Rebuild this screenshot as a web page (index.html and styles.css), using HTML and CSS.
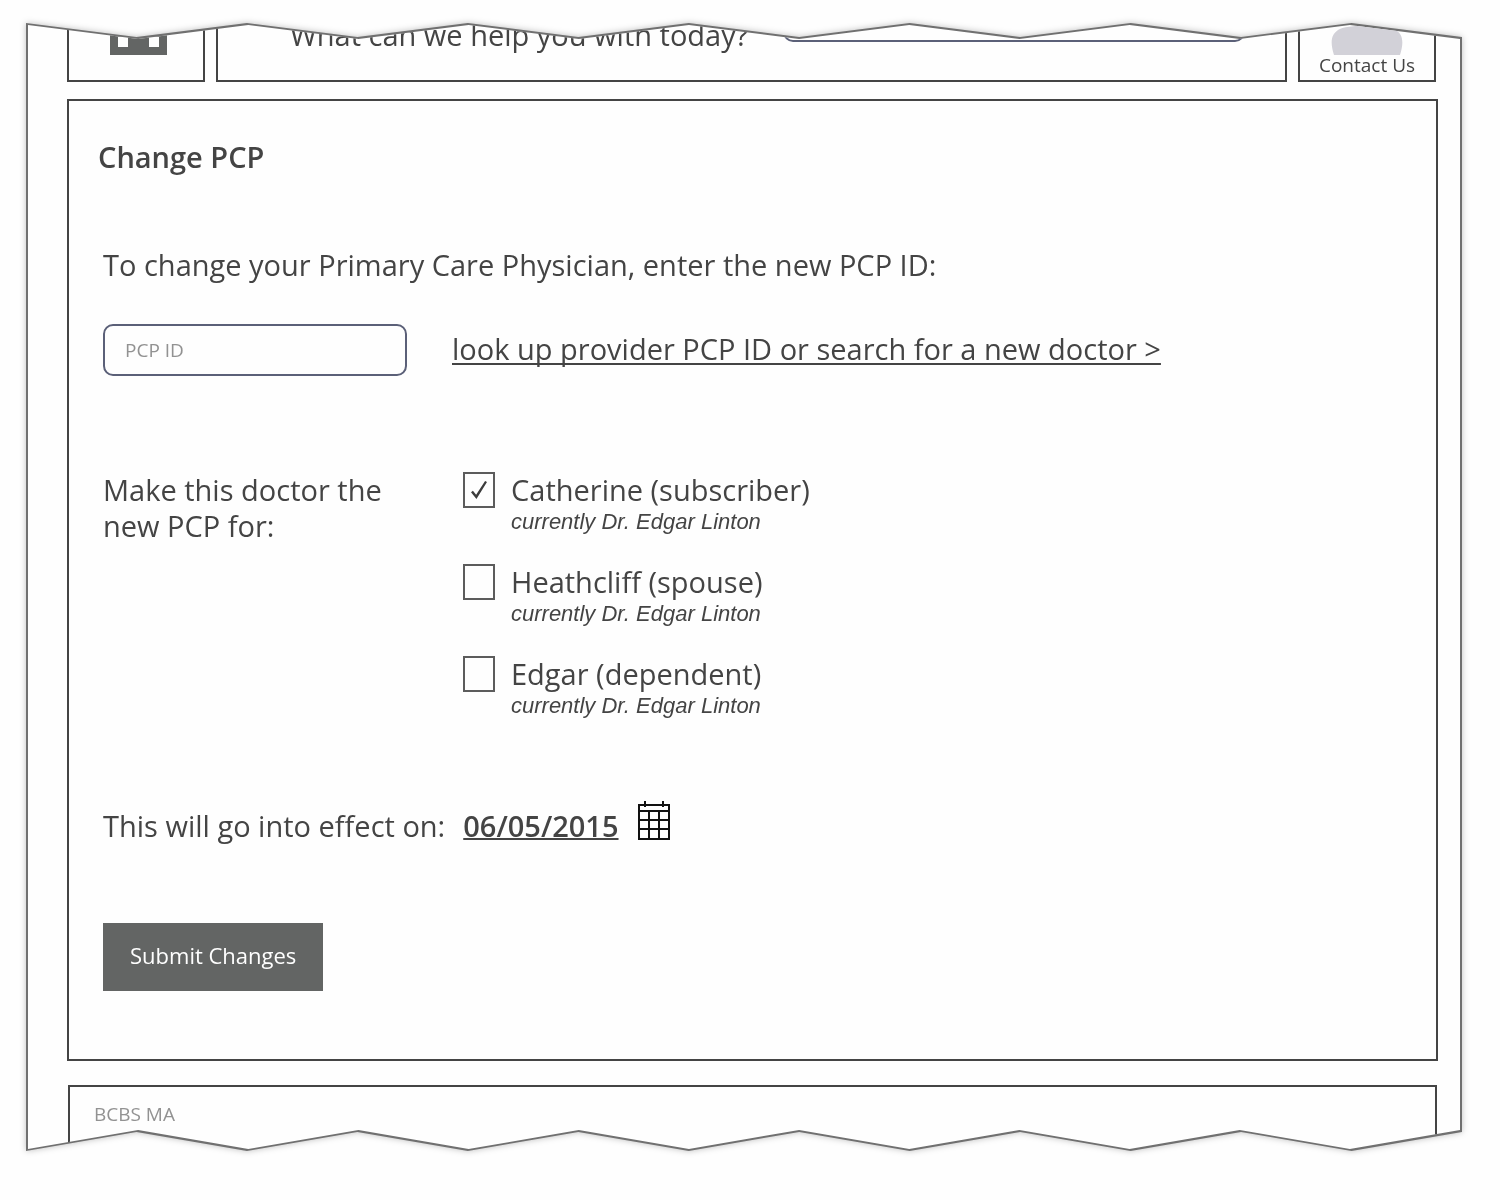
FILE: index.html
```html
<!DOCTYPE html>
<html lang="en">
<head>
<meta charset="utf-8">
<meta name="viewport" content="width=device-width, initial-scale=1">
<title>Change PCP</title>
<link rel="stylesheet" href="styles.css">
</head>
<body>
<div class="torn">
  <div class="outline">
    <div class="sheet">
      <header class="top">
        <a class="box home" href="#" aria-label="Home">
          <svg width="57" height="31" viewBox="0 0 57 31" aria-hidden="true">
            <path fill="#636564" fill-rule="evenodd" d="M0 0H57V31H0ZM8 13V23H18V13ZM39 13V23H49V13Z"/>
          </svg>
        </a>
        <div class="box ask">
          <label for="help">What can we help you with today?</label>
          <input id="help" class="field ask-field" type="text">
        </div>
        <a class="box contact" href="#">
          <svg width="72" height="31" viewBox="0 0 72 31" aria-hidden="true">
            <path fill="#d2d1d8" d="M3 31C-1 18 0 11 7 6C15 0 56 0 65 6C72 11 73 18 69 31Z"/>
          </svg>
          <span>Contact Us</span>
        </a>
      </header>

      <main class="panel">
        <h1>Change PCP</h1>
        <form class="form">
          <label class="intro" for="pcp">To change your Primary Care Physician, enter the new PCP ID:</label>
          <div class="lookup">
            <input id="pcp" class="field" type="text" placeholder="PCP ID">
            <a class="link" href="#">look up provider PCP ID or search for a new doctor &gt;</a>
          </div>
          <div class="members" role="group" aria-labelledby="members-title">
            <p id="members-title" class="members-title">Make this doctor the new PCP for:</p>
            <ul class="list">
              <li class="member">
                <input id="m1" class="check" type="checkbox" checked>
                <label for="m1">Catherine (subscriber)<em>currently Dr. Edgar Linton</em></label>
              </li>
              <li class="member">
                <input id="m2" class="check" type="checkbox">
                <label for="m2">Heathcliff (spouse)<em>currently Dr. Edgar Linton</em></label>
              </li>
              <li class="member">
                <input id="m3" class="check" type="checkbox">
                <label for="m3">Edgar (dependent)<em>currently Dr. Edgar Linton</em></label>
              </li>
            </ul>
          </div>
          <div class="effect">
            <span>This will go into effect on:</span>
            <a class="date" href="#">06/05/2015</a>
            <button class="calendar" type="button" aria-label="Choose a date">
              <svg width="34" height="40" viewBox="0 0 34 40" aria-hidden="true">
                <path fill="none" stroke="#111" stroke-width="2" d="M2 4H32V38H2ZM2 10H32M2 19H32M2 28H32M12 10V38M22 10V38M8 0V6M26 0V6"/>
              </svg>
            </button>
          </div>
          <button class="submit" type="submit">Submit Changes</button>
        </form>
      </main>

      <footer class="foot">BCBS MA</footer>
    </div>
  </div>
</div>
</body>
</html>
```
FILE: styles.css
```css
* { box-sizing: border-box; }

body {
  margin: 0;
  background: #fefefe;
  color: #444;
  font: 29px/36px "Open Sans", "Noto Sans", sans-serif;
}

a { color: inherit; }

/* Sheet with zigzag edges: a grey outline and, 2px inside it, the page itself */
.torn {
  --zigzag: polygon(
    0 1px, calc(100% / 13) 15px, calc(200% / 13) 1px, calc(300% / 13) 15px,
    calc(400% / 13) 1px, calc(500% / 13) 15px, calc(600% / 13) 1px, calc(700% / 13) 15px,
    calc(800% / 13) 1px, calc(900% / 13) 15px, calc(1000% / 13) 1px, calc(1100% / 13) 15px,
    calc(1200% / 13) 1px, 100% 15px,
    100% calc(100% - 20px), calc(1200% / 13) calc(100% - 1px), calc(1100% / 13) calc(100% - 20px),
    calc(1000% / 13) calc(100% - 1px), calc(900% / 13) calc(100% - 20px), calc(800% / 13) calc(100% - 1px),
    calc(700% / 13) calc(100% - 20px), calc(600% / 13) calc(100% - 1px), calc(500% / 13) calc(100% - 20px),
    calc(400% / 13) calc(100% - 1px), calc(300% / 13) calc(100% - 20px), calc(200% / 13) calc(100% - 1px),
    calc(100% / 13) calc(100% - 20px), 0 calc(100% - 1px)
  );
  margin: 22px 38px 48px 26px;
  filter: drop-shadow(0 0 3px rgba(0, 0, 0, 0.25));
}

.outline {
  padding: 2px;
  background: #707070;
  clip-path: var(--zigzag);
}

.sheet {
  padding: 0 22px 0 39px;
  background: #fefefe;
  clip-path: var(--zigzag);
}

.top {
  display: grid;
  grid-template-columns: 138px 1fr 138px;
  gap: 11px;
  margin-right: 2px;
}

.box {
  display: flex;
  border: 2px solid #444;
  border-top: 0;
}
.home { padding-left: 4px; justify-content: center; align-items: flex-start; }
.ask {
  padding: 0 40px 34px 72px;
  justify-content: space-between;
  align-items: flex-start;
}
.ask label { line-height: 22px; }
.contact {
  flex-direction: column;
  align-items: center;
  font-size: 19px;
  line-height: 20px;
  text-decoration: none;
}

.field {
  width: 304px;
  height: 52px;
  padding: 0 20px;
  border: 2px solid #5b6078;
  border-radius: 10px;
  background: transparent;
  color: inherit;
  font: inherit;
  font-size: 19px;
}
.field::placeholder { color: #929292; opacity: 1; }
.ask-field {
  width: 462px;
  height: 18px;
  border-top: 0;
  border-radius: 0 0 10px 10px;
}

.panel {
  margin-top: 17px;
  padding: 38px 29px 68px;
  border: 2px solid #444;
}

h1 { margin: 0; font-size: 29px; font-weight: 600; line-height: 36px; }

.form { padding: 72px 0 0 5px; }

.intro { display: block; }

.lookup {
  display: flex;
  align-items: center;
  gap: 45px;
  margin-top: 41px;
}

.link {
  padding-bottom: 3px;
  text-decoration-thickness: 2px;
  text-underline-offset: 3px;
  text-decoration-skip-ink: none;
}

.members {
  display: grid;
  grid-template-columns: 300px 1fr;
  gap: 60px;
  margin-top: 96px;
}
.members-title { margin: 0; }
.list {
  display: grid;
  gap: 29px;
  margin: 0;
  padding: 0;
  list-style: none;
}
.member { display: flex; gap: 16px; }
.member em {
  display: block;
  font: italic 22px/27px "Liberation Sans", Arial, sans-serif;
}

.check {
  appearance: none;
  display: grid;
  place-items: center;
  width: 32px;
  height: 36px;
  margin: 0;
  border: 2px solid #5c5c5c;
}
.check:checked::before {
  content: "";
  width: 16px;
  height: 18px;
  background: #3c3c3c;
  clip-path: polygon(0 62%, 12% 54%, 32% 76%, 88% 0, 100% 6%, 34% 100%);
}

.effect {
  display: flex;
  align-items: flex-end;
  gap: 18px;
  margin-top: 82px;
}
.date { font-weight: 600; text-decoration-thickness: 2px; }
.calendar { padding: 0 0 3px; border: 0; background: none; }
.calendar svg { display: block; }

.submit {
  display: block;
  margin-top: 79px;
  padding: 14px 27px 18px;
  border: 0;
  background: #636564;
  color: #fefefe;
  font: inherit;
  font-size: 22px;
  line-height: 36px;
}

.foot {
  margin: 24px 1px 0;
  padding: 9px 24px 18px;
  border: 2px solid #444;
  border-bottom: 0;
  color: #929292;
  font-size: 19px;
}
```
